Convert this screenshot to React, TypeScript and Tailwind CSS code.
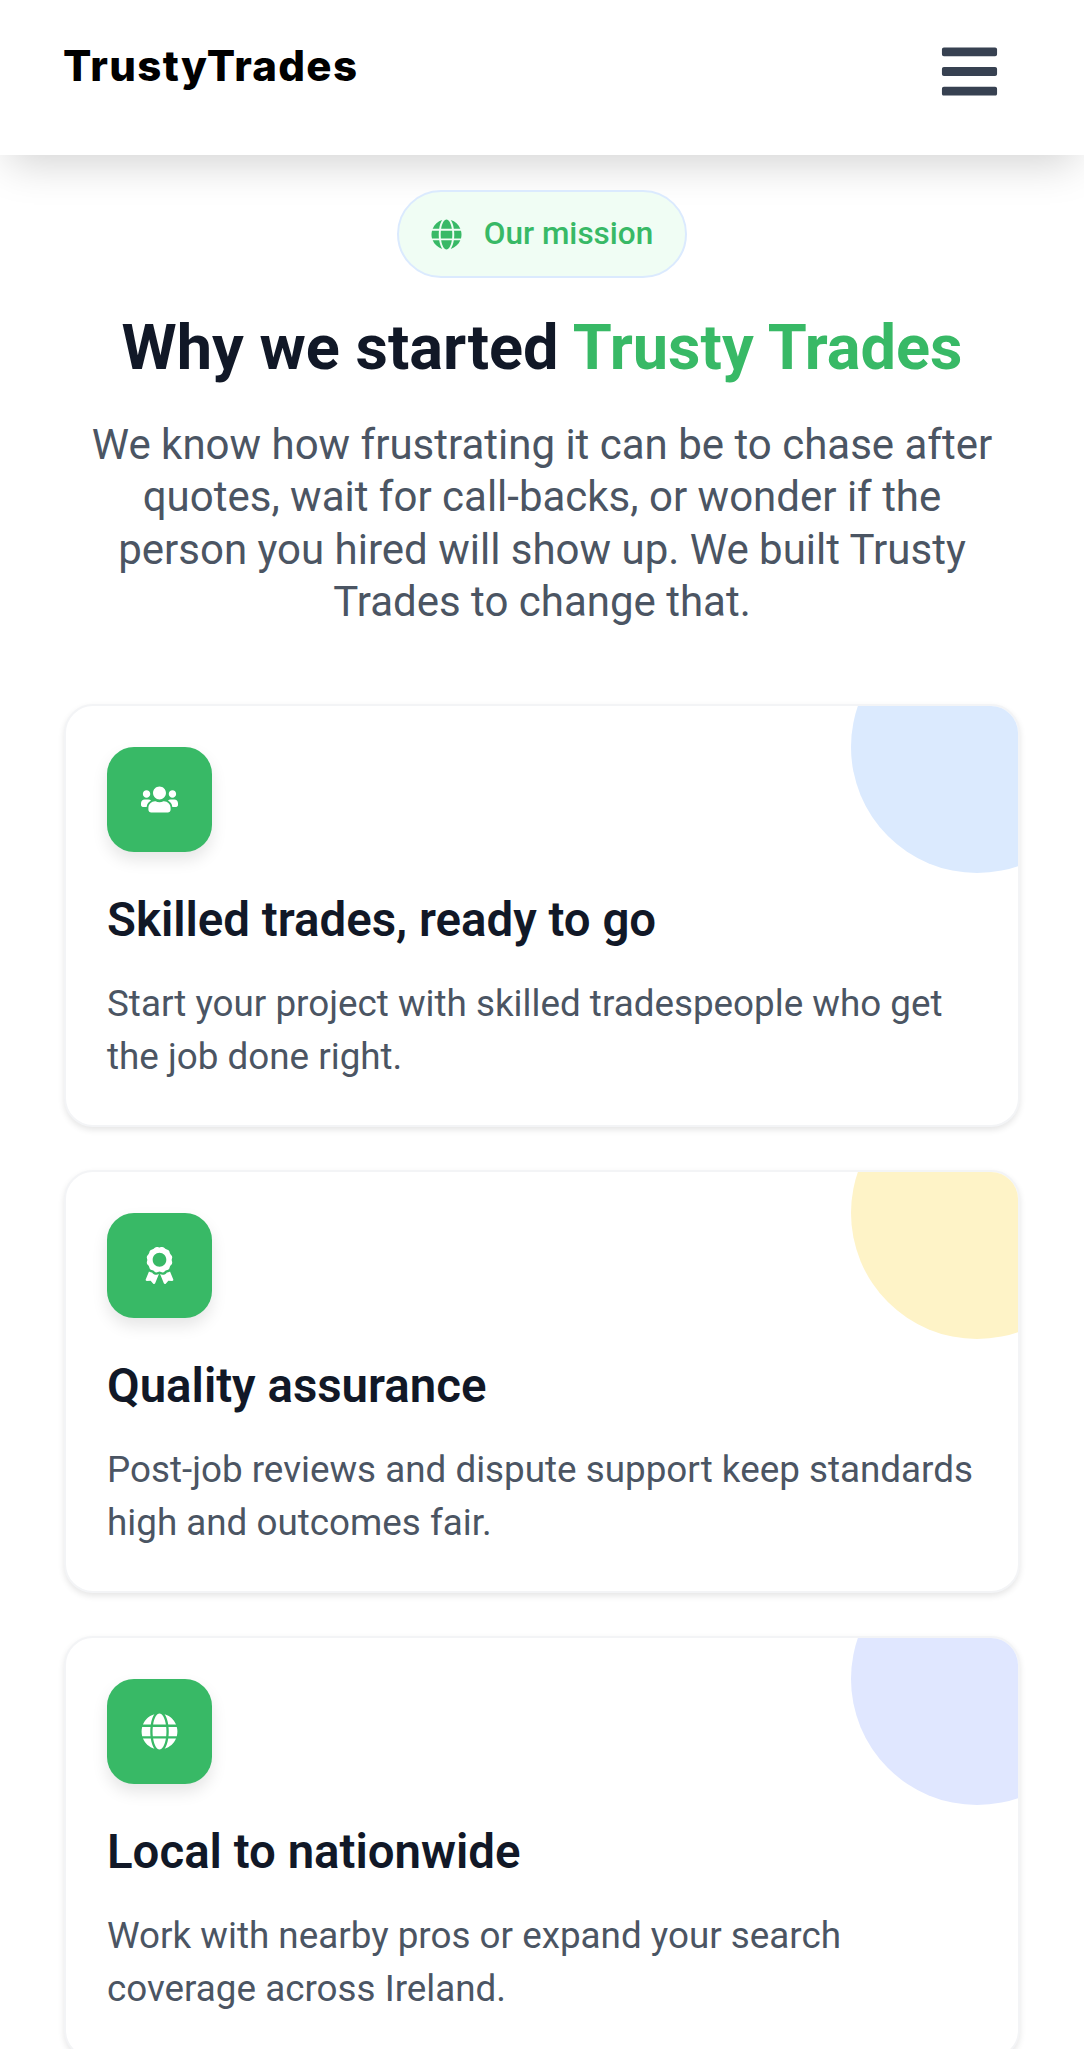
import React from "react";
import { FaAward, FaBars, FaGlobe, FaUsers } from "react-icons/fa";

const cards = [
  {
    title: "Skilled trades, ready to go",
    body: "Start your project with skilled tradespeople who get the job done right.",
    icon: <FaUsers size={37} />,
    blob: "bg-[#dbeafe]",
  },
  {
    title: "Quality assurance",
    body: "Post-job reviews and dispute support keep standards high and outcomes fair.",
    icon: <FaAward size={37} />,
    blob: "bg-[#fef3c7]",
  },
  {
    title: "Local to nationwide",
    body: "Work with nearby pros or expand your search coverage across Ireland.",
    icon: <FaGlobe size={37} />,
    blob: "bg-[#e0e7ff]",
  },
];

export default function App() {
  return (
    <div className="h-[2049px] overflow-hidden bg-white font-['Roboto',sans-serif]">
      {/* Header */}
      <header className="relative z-10 h-[155px] bg-white px-[64px] pt-[40px] shadow-[0_16px_40px_-8px_rgba(0,0,0,0.18)]">
        <div className="flex items-start justify-between">
          <span className="-ml-[1px] font-['Inter',sans-serif] text-[42px] leading-[52px] font-extrabold tracking-[1.3px] text-black">
            TrustyTrades
          </span>
          <button className="mr-[19px] text-[#374151]">
            <FaBars size={63} />
          </button>
        </div>
      </header>

      <main className="px-[64px]">
        {/* Intro */}
        <section className="flex flex-col items-center pt-[35px] text-center">
          <div className="relative z-20 flex h-[88px] w-[290px] items-center justify-center gap-[22px] rounded-full border-2 border-[#dbeafe] bg-[#f0fdf4] text-[31.5px] font-medium text-[#38b966]">
            <FaGlobe size={31} />
            <span>Our mission</span>
          </div>
          <h1 className="mt-[30px] text-[63.1px] leading-[78px] font-bold text-[#111827]">
            Why we started <span className="text-[#38b966]">Trusty Trades</span>
          </h1>
          <p className="mt-[33px] w-[930px] text-[42px] leading-[52.3px] text-[#4b5563]">
            We know how frustrating it can be to chase after quotes, wait for call-backs, or wonder if the person you
            hired will show up. We built Trusty Trades to change that.
          </p>
        </section>

        {/* Cards */}
        <section className="mt-[76px] flex flex-col gap-[43px]">
          {cards.map((card) => (
            <article
              key={card.title}
              className="relative h-[423px] overflow-hidden rounded-[29px] border-2 border-[#f3f4f6] bg-white px-[41px] pt-[41px] shadow-[0_3px_6px_rgba(0,0,0,0.1)]"
            >
              <div className={`absolute right-[-85px] top-[-85px] h-[252px] w-[252px] rounded-full ${card.blob}`} />
              <div className="relative flex h-[105px] w-[105px] items-center justify-center rounded-[27px] bg-[#38b966] text-white shadow-[0_8px_16px_rgba(0,0,0,0.1)]">
                {card.icon}
              </div>
              <h2 className="relative mt-[40px] text-[47.4px] leading-[56px] font-semibold text-[#111827]">
                {card.title}
              </h2>
              <p className="relative mt-[29px] text-[36.8px] leading-[53px] text-[#4b5563]">{card.body}</p>
            </article>
          ))}
        </section>
      </main>
    </div>
  );
}
